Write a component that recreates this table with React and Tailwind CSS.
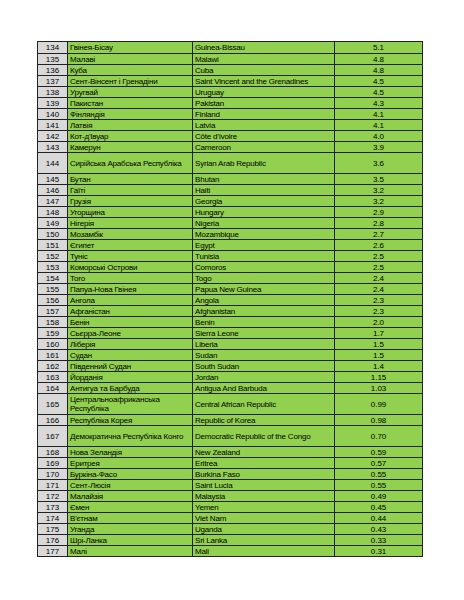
import React from "react";

const rows = [
  ["134", "Гвінея-Бісау", "Guinea-Bissau", "5.1"],
  ["135", "Малаві", "Malawi", "4.8"],
  ["136", "Куба", "Cuba", "4.8"],
  ["137", "Сент-Вінсент і Гренадіни", "Saint Vincent and the Grenadines", "4.5"],
  ["138", "Уругвай", "Uruguay", "4.5"],
  ["139", "Пакистан", "Pakistan", "4.3"],
  ["140", "Фінляндія", "Finland", "4.1"],
  ["141", "Латвія", "Latvia", "4.1"],
  ["142", "Кот-д'Івуар", "Côte d'Ivoire", "4.0"],
  ["143", "Камерун", "Cameroon", "3.9"],
  ["144", "Сирійська Арабська Республіка", "Syrian Arab Republic", "3.6", true],
  ["145", "Бутан", "Bhutan", "3.5"],
  ["146", "Гаїті", "Haiti", "3.2"],
  ["147", "Грузія", "Georgia", "3.2"],
  ["148", "Угорщина", "Hungary", "2.9"],
  ["149", "Нігерія", "Nigeria", "2.8"],
  ["150", "Мозамбік", "Mozambique", "2.7"],
  ["151", "Єгипет", "Egypt", "2.6"],
  ["152", "Туніс", "Tunisia", "2.5"],
  ["153", "Коморські Острови", "Comoros", "2.5"],
  ["154", "Того", "Togo", "2.4"],
  ["155", "Папуа-Нова Гвінея", "Papua New Guinea", "2.4"],
  ["156", "Ангола", "Angola", "2.3"],
  ["157", "Афганістан", "Afghanistan", "2.3"],
  ["158", "Бенін", "Benin", "2.0"],
  ["159", "Сьєрра-Леоне", "Sierra Leone", "1.7"],
  ["160", "Ліберія", "Liberia", "1.5"],
  ["161", "Судан", "Sudan", "1.5"],
  ["162", "Південний Судан", "South Sudan", "1.4"],
  ["163", "Йорданія", "Jordan", "1.15"],
  ["164", "Антигуа та Барбуда", "Antigua And Barbuda", "1.03"],
  ["165", "Центральноафриканська Республіка", "Central African Republic", "0.99", true],
  ["166", "Республіка Корея", "Republic of Korea", "0.98"],
  ["167", "Демократична Республіка Конго", "Democratic Republic of the Congo", "0.70", true],
  ["168", "Нова Зеландія", "New Zealand", "0.59"],
  ["169", "Еритрея", "Eritrea", "0.57"],
  ["170", "Буркіна-Фасо", "Burkina Faso", "0.55"],
  ["171", "Сент-Люсія", "Saint Lucia", "0.55"],
  ["172", "Малайзія", "Malaysia", "0.49"],
  ["173", "Ємен", "Yemen", "0.45"],
  ["174", "В'єтнам", "Viet Nam", "0.44"],
  ["175", "Уганда", "Uganda", "0.43"],
  ["176", "Шрі-Ланка", "Sri Lanka", "0.33"],
  ["177", "Малі", "Mali", "0.31"],
];

export default function App() {
  return (
    <div
      className="w-[464px] h-[600px] bg-white pt-[41px] pl-[37px]"
      style={{ fontFamily: '"Liberation Sans", Arial, sans-serif' }}
    >
      <div className="w-[386px] border border-[#222] text-[8px] leading-[9px] text-black">
        {rows.map(([n, ua, en, v, tall], i) => (
          <div
            key={n}
            className={`grid grid-cols-[29px_125px_142px_1fr] ${tall ? "h-[21px]" : "h-[11px]"} ${i > 0 ? "border-t border-[#222]" : ""}`}
          >
            <div className="bg-[#d9d9d9] flex items-center justify-center">{n}</div>
            <div className="bg-[#92d050] border-l border-[#222] flex items-center pl-[2px] tracking-[-0.2px]">{ua}</div>
            <div className="bg-[#92d050] border-l border-[#222] flex items-center pl-[2px] tracking-[-0.2px]">{en}</div>
            <div className="bg-[#92d050] border-l border-[#222] flex items-center justify-center">{v}</div>
          </div>
        ))}
      </div>
    </div>
  );
}
